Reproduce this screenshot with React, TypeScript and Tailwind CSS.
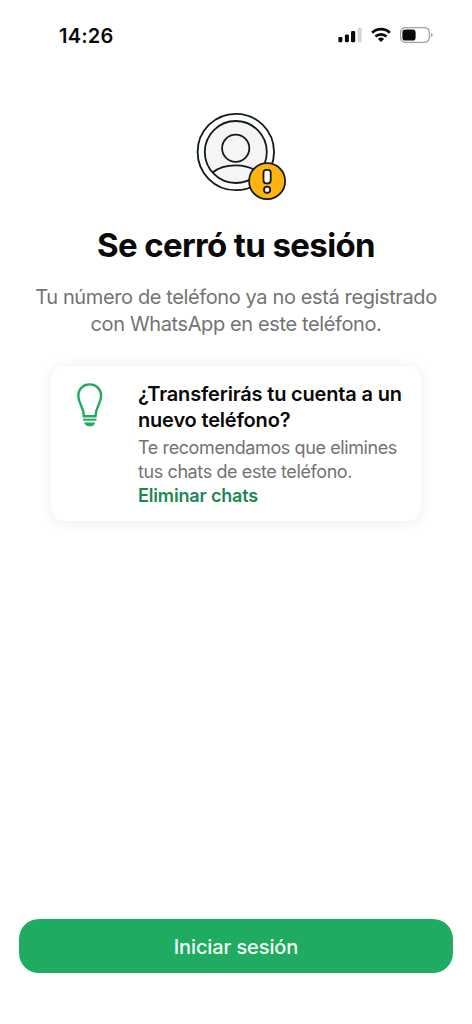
import React from 'react';

const SignalIcon = () => (
  <svg width="24" height="16" viewBox="0 0 24 16" fill="#0a0a0a">
    <rect x="0.4" y="10" width="4" height="5.2" rx="1.2" />
    <rect x="6.9" y="7.4" width="4" height="7.8" rx="1.2" />
    <rect x="13" y="4" width="4.2" height="11.2" rx="1.2" />
    <rect x="19.6" y="0.8" width="4" height="14.4" rx="1.2" fill="#d4d4d4" />
  </svg>
);

const WifiIcon = () => (
  <svg width="20" height="16" viewBox="0 0 20 16" fill="none" stroke="#0a0a0a" strokeWidth="2.8">
    <path d="M1.1 5.7a12.8 12.8 0 0 1 17.8 0" />
    <path d="M4.5 9.5a8 8 0 0 1 11 0" />
    <path d="M10 15 6.9 11.9a4.5 4.5 0 0 1 6.2 0Z" fill="#0a0a0a" stroke="none" />
  </svg>
);

const BatteryIcon = () => (
  <svg width="33" height="16" viewBox="0 0 33 16">
    <rect x="0.6" y="0.6" width="28.8" height="14.8" rx="4.8" fill="none" stroke="#a3a3a3" strokeWidth="1.3" />
    <rect x="2.4" y="2.4" width="13.2" height="11.2" rx="3.2" fill="#0a0a0a" />
    <path d="M31 5.7c1 .4 1.6 1.3 1.6 2.3s-.6 1.9-1.6 2.3Z" fill="#a3a3a3" />
  </svg>
);

const AvatarAlert = () => (
  <svg width="96" height="90" viewBox="0 0 96 90" fill="none" stroke="#111b21" strokeWidth="1.8">
    <circle cx="45.8" cy="41" r="38.2" fill="#fff" />
    <circle cx="45.8" cy="41" r="31" fill="#f7f5f3" />
    <circle cx="45.7" cy="37.2" r="13.6" />
    <path d="M22.7 61.5c5.4-4.5 13.4-7.1 22.7-7.1 7.5 0 14.2 1.6 19.4 4.7" />
    <circle cx="77.1" cy="70.2" r="18" fill="#ffb30f" />
    <rect x="73.5" y="58.9" width="7.2" height="13.4" rx="2.7" fill="#fff" />
    <circle cx="77.1" cy="78.7" r="3.1" fill="#fff" />
  </svg>
);

const BulbIcon = () => (
  <svg width="26" height="44" viewBox="0 0 26 44" fill="none" stroke="#1fab61" strokeWidth="2.4">
    <path d="M6.9 33.2C6.900 23.800 1.300 21 1.300 12.800 1.300 6 6.200 1.400 12.700 1.400S24.100 6 24.100 12.800C24.100 21 18.500 23.800 18.500 33.200Z" />
    <path d="M6 36.700h13.400" strokeWidth="2" />
    <path d="M7 39.400h11.400c-.9 2.500-3 3.900-5.700 3.900s-4.800-1.400-5.700-3.900Z" fill="#1fab61" stroke="none" />
  </svg>
);

const App = () => {
  return (
    <div className="flex h-screen w-full flex-col overflow-hidden bg-white font-['Inter','Liberation_Sans',sans-serif] text-[#0a0a0a]">
      <header className="flex h-[70px] items-center justify-between pl-[59px] pr-[39px]">
        <span className="pt-px text-[20px] font-semibold leading-6 tracking-[0.2px]">14:26</span>
        <div className="flex items-center gap-[9px]">
          <SignalIcon />
          <WifiIcon />
          <BatteryIcon />
        </div>
      </header>

      <main className="flex flex-1 flex-col items-center">
        <div className="mt-[41px] ml-1">
          <AvatarAlert />
        </div>
        <h1 className="mt-6 whitespace-nowrap text-[33px] font-bold leading-10 tracking-[-0.63px]">
          Se cerró tu sesión
        </h1>
        <p className="mt-[19px] whitespace-nowrap text-center text-[20px] leading-[26.5px] tracking-[-0.38px] text-[#737373]">
          Tu número de teléfono ya no está registrado
          <br />
          con WhatsApp en este teléfono.
        </p>

        <section className="mt-[29px] flex h-[155px] w-[370px] rounded-[14px] bg-white pl-[26px] pt-[15px] shadow-[0_1px_14px_rgba(0,0,0,0.08)]">
          <div className="w-[61px] shrink-0 pt-[2px]">
            <BulbIcon />
          </div>
          <div className="whitespace-nowrap">
            <h2 className="text-[20px] font-semibold leading-[26px] tracking-[-0.18px]">
              ¿Transferirás tu cuenta a un
              <br />
              nuevo teléfono?
            </h2>
            <p className="mt-[3px] text-[18px] leading-6 tracking-[-0.4px] text-[#737373]">
              Te recomendamos que elimines
              <br />
              tus chats de este teléfono.
            </p>
            <a className="block text-[18px] font-semibold leading-6 tracking-[-0.15px] text-[#1b8755]">Eliminar chats</a>
          </div>
        </section>
      </main>

      <footer className="px-[19px] pb-[51px]">
        <button className="flex h-[54px] w-full items-center justify-center rounded-[20px] bg-[#1fab61] pt-px text-[20px] font-medium tracking-[-0.1px] text-[#f2fff7]">
          Iniciar sesión
        </button>
      </footer>
    </div>
  );
};

export default App;
